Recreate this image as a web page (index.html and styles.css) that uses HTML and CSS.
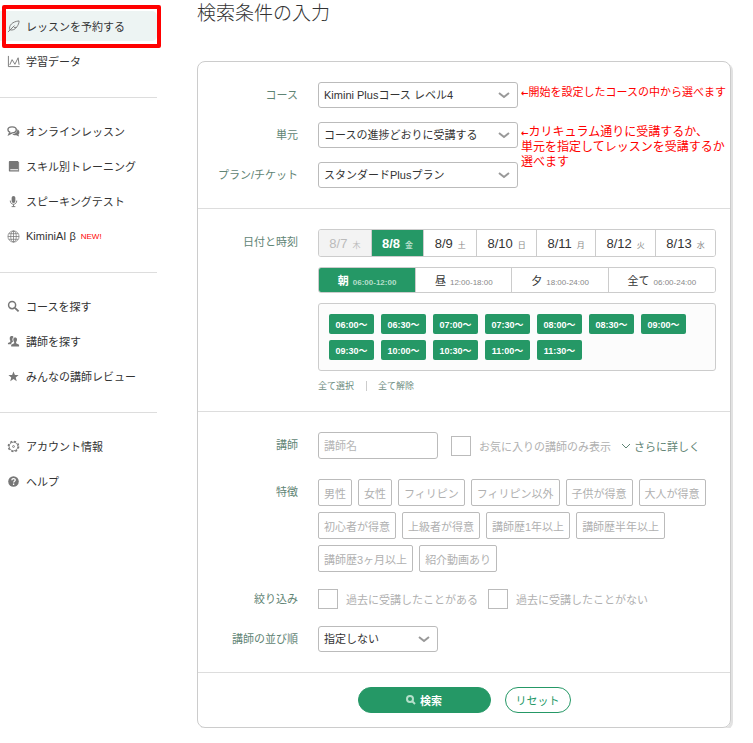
FILE: index.html
```html
<!DOCTYPE html>
<html lang="ja">
<head>
    <meta charset="UTF-8">
    <meta name="viewport" content="width=device-width, initial-scale=1.0">
    <title>検索条件の入力</title>
    <link rel="stylesheet" href="styles.css">
</head>
<body>
    <nav class="sidebar">
        <div class="menu-group">
            <a href="#" class="active">
                <svg viewBox="0 0 14 14"><path d="M1 13L8 6M3 10.5C1.500 6 6 1.500 13 1C13 3.500 12 5.500 10.500 7.500C9 10 6 11.500 3 10.500M7.500 8H10"/></svg>
                レッスンを予約する
            </a>
            <a href="#">
                <svg viewBox="0 0 14 14"><path d="M1.500 1V12.500H13.500M3 10.500L5.500 5L8.500 10L12 3L13 10.500"/></svg>
                学習データ
            </a>
        </div>
        <div class="menu-group">
            <a href="#">
                <svg viewBox="0 0 14 14"><path stroke-width="1.500" d="M5.500 2C8.200 2 10 3.300 10 5.200S8.200 8.500 5.500 8.500L2 10.300L3 7.800C1.700 7.200 1 6.300 1 5.200C1 3.300 2.800 2 5.500 2Z"/><path class="fill" d="M11 4.500C14 6 14 9 12.300 10.200L13 12.500L10 11C8 11.200 6.500 10.700 5.700 9.700C9 9.500 11.500 7.500 11 4.500Z"/></svg>
                オンラインレッスン
            </a>
            <a href="#">
                <svg viewBox="0 0 14 14"><path class="fill" d="M2.500 1H12V10H3.500V11H12V12.500H3C2.300 12.500 2 12 2 11.300V1.800Z"/><path d="M12.500 2V12.500"/></svg>
                スキル別トレーニング
            </a>
            <a href="#">
                <svg viewBox="0 0 14 14"><rect class="fill" x="5" y="1" width="4" height="7.500" rx="2"/><path d="M3.500 6C3.500 11.300 10.500 11.300 10.500 6M7 10V12.500M5 12.500H9"/></svg>
                スピーキングテスト
            </a>
            <a href="#">
                <svg viewBox="0 0 14 14" stroke-width=".8"><circle cx="7" cy="7" r="6"/><ellipse cx="7" cy="7" rx="3" ry="6"/><path d="M7 1V13M1 7H13M2 4H12M2 10H12"/></svg>
                KiminiAI β <span class="new">NEW!</span>
            </a>
        </div>
        <div class="menu-group">
            <a href="#">
                <svg viewBox="0 0 14 14"><circle cx="5.500" cy="5.500" r="3.800" stroke-width="1.600"/><path stroke-width="2" d="M8.500 8.500L12.500 12.300"/></svg>
                コースを探す
            </a>
            <a href="#">
                <svg viewBox="0 0 14 14"><path class="fill" d="M3 3C3 .5 7 .5 7 2.500C5.500 3.500 5.500 5.500 6.500 7C5 8 4.500 8.500 4.500 10H1V8.500L3.500 7.500V6C2.800 5 3 4 3 3ZM6.800 4.500C6.800 2 10.800 2 10.800 4.500C10.800 6 10.300 7 9.800 7.500V9L13 10.500V12.500H4.500V10.500L7.700 9V7.500C7.200 7 6.800 6 6.800 4.500Z"/></svg>
                講師を探す
            </a>
            <a href="#">
                <svg viewBox="0 0 14 14"><path class="fill" d="M7 1.500L8.500 5.300L12.500 5.500L9.400 8L10.500 12L7 9.800L3.500 12L4.600 8L1.500 5.500L5.500 5.300Z"/></svg>
                みんなの講師レビュー
            </a>
        </div>
        <div class="menu-group">
            <a href="#">
                <svg viewBox="0 0 14 14"><circle cx="7" cy="7" r="4.700"/><circle cx="7" cy="7" r="5.600" stroke-width="1.400" stroke-dasharray="2.200 2.200"/><circle cx="7" cy="7" r="1"/></svg>
                アカウント情報
            </a>
            <a href="#">
                <svg viewBox="0 0 14 14"><circle class="fill" cx="7" cy="7" r="5.700"/><path class="question" d="M5.200 5.700C5.200 3.300 9 3.500 8.900 5.500C8.900 6.800 7.100 6.600 7.100 8.200M7.100 9.200V10.700"/></svg>
                ヘルプ
            </a>
        </div>
    </nav>

    <main>
        <h1>検索条件の入力</h1>
        <form class="panel">
            <section>
                <div class="row">
                    <label class="title" for="course">コース</label>
                    <div class="field">
                        <select id="course">
                            <option>Kimini Plusコース レベル4</option>
                        </select>
                        <p class="note"><span class="arrow">←</span>開始を設定したコースの中から選べます</p>
                    </div>
                </div>
                <div class="row">
                    <label class="title" for="unit">単元</label>
                    <div class="field">
                        <select id="unit">
                            <option>コースの進捗どおりに受講する</option>
                        </select>
                        <p class="note large"><span class="arrow">←</span>カリキュラム通りに受講するか、<br>単元を指定してレッスンを受講するか<br>選べます</p>
                    </div>
                </div>
                <div class="row">
                    <label class="title" for="plan">プラン/チケット</label>
                    <div class="field">
                        <select id="plan">
                            <option>スタンダードPlusプラン</option>
                        </select>
                    </div>
                </div>
            </section>

            <section>
                <div class="row">
                    <span class="title">日付と時刻</span>
                    <div class="schedule">
                        <div class="tabs dates">
                            <button type="button" disabled>8/7<small>木</small></button>
                            <button type="button" class="selected">8/8<small>金</small></button>
                            <button type="button">8/9<small>土</small></button>
                            <button type="button">8/10<small>日</small></button>
                            <button type="button">8/11<small>月</small></button>
                            <button type="button">8/12<small>火</small></button>
                            <button type="button">8/13<small>水</small></button>
                        </div>
                        <div class="tabs periods">
                            <button type="button" class="selected">朝<small>06:00-12:00</small></button>
                            <button type="button">昼<small>12:00-18:00</small></button>
                            <button type="button">夕<small>18:00-24:00</small></button>
                            <button type="button">全て<small>06:00-24:00</small></button>
                        </div>
                        <div class="times">
                            <button type="button">06:00〜</button>
                            <button type="button">06:30〜</button>
                            <button type="button">07:00〜</button>
                            <button type="button">07:30〜</button>
                            <button type="button">08:00〜</button>
                            <button type="button">08:30〜</button>
                            <button type="button">09:00〜</button>
                            <button type="button">09:30〜</button>
                            <button type="button">10:00〜</button>
                            <button type="button">10:30〜</button>
                            <button type="button">11:00〜</button>
                            <button type="button">11:30〜</button>
                        </div>
                        <div class="all-links">
                            <a href="#">全て選択</a>
                            <a href="#">全て解除</a>
                        </div>
                    </div>
                </div>
            </section>

            <section class="teacher">
                <div class="row name">
                    <label class="title" for="teacher">講師</label>
                    <div class="field">
                        <input type="text" id="teacher" placeholder="講師名">
                        <label class="check"><input type="checkbox">お気に入りの講師のみ表示</label>
                        <a href="#" class="more"><svg viewBox="0 0 10 6"><path d="M1 1L5 5L9 1"/></svg>さらに詳しく</a>
                    </div>
                </div>
                <div class="row">
                    <span class="title">特徴</span>
                    <div class="tags">
                        <button type="button">男性</button>
                        <button type="button">女性</button>
                        <button type="button">フィリピン</button>
                        <button type="button">フィリピン以外</button>
                        <button type="button">子供が得意</button>
                        <button type="button">大人が得意</button>
                        <button type="button">初心者が得意</button>
                        <button type="button">上級者が得意</button>
                        <button type="button">講師歴1年以上</button>
                        <button type="button">講師歴半年以上</button>
                        <button type="button">講師歴3ヶ月以上</button>
                        <button type="button">紹介動画あり</button>
                    </div>
                </div>
                <div class="row history">
                    <span class="title">絞り込み</span>
                    <div class="field">
                        <label class="check"><input type="checkbox">過去に受講したことがある</label>
                        <label class="check"><input type="checkbox">過去に受講したことがない</label>
                    </div>
                </div>
                <div class="row">
                    <label class="title" for="sort">講師の並び順</label>
                    <div class="field">
                        <select id="sort" class="short">
                            <option>指定しない</option>
                        </select>
                    </div>
                </div>
            </section>

            <div class="actions">
                <button type="submit" class="search"><svg viewBox="0 0 10 10"><circle cx="4" cy="4" r="3"/><path d="M6 6L9 9"/></svg>検索</button>
                <button type="reset" class="reset">リセット</button>
            </div>
        </form>
    </main>
</body>
</html>
```

FILE: styles.css
```css
* {
    box-sizing: border-box;
}
body {
    display: flex;
    gap: 40px;
    margin: 0;
    padding-right: 22px;
    font-family: "Liberation Sans", "Noto Sans CJK JP", sans-serif;
    font-size: 11px;
    color: #333;
    background: #fff;
}
a {
    color: inherit;
    text-decoration: none;
}
button,
input,
select {
    margin: 0;
    font-family: inherit;
    font-size: 11px;
}
svg {
    fill: none;
    stroke: currentColor;
}

/* sidebar */
.sidebar {
    flex: 0 0 157px;
}
.menu-group {
    display: flex;
    flex-direction: column;
    gap: 5px;
    padding: 18px 0 21px;
    border-bottom: 1px solid #ddd;
}
.menu-group:first-child {
    padding-top: 11px;
}
.menu-group:last-child {
    border-bottom: 0;
}
.menu-group a {
    display: flex;
    align-items: center;
    height: 30px;
    padding-left: 7px;
    border-radius: 0 5px 5px 0;
}
.menu-group svg {
    width: 13px;
    height: 13px;
    margin-right: 6px;
    color: #777;
}
.menu-group .fill {
    fill: currentColor;
    stroke: none;
}
.menu-group .question {
    stroke: #fff;
    stroke-width: 1.4;
}
.menu-group .active {
    position: relative;
    background: #edf4f3;
}
.active::after {
    content: "";
    position: absolute;
    inset: -6px -4px -7px 2px;
    border: 4px solid #f00;
    border-radius: 2px;
}
.new {
    margin-left: 5px;
    font-size: 8px;
    color: #f00;
}

/* search form */
main {
    flex: 1;
    min-width: 0;
}
h1 {
    margin: 0 0 33px;
    font-size: 19px;
    font-weight: 300;
    line-height: 28px;
}
.panel {
    border: 1px solid #ccc;
    border-radius: 8px;
    box-shadow: 2px 2px 0 #e2e2e2;
}
section {
    display: flex;
    flex-direction: column;
    gap: 14px;
    padding: 20px 14px 20px 0;
    border-bottom: 1px solid #ddd;
}
.row {
    display: flex;
    gap: 20px;
}
.title {
    flex: 0 0 100px;
    line-height: 26px;
    text-align: right;
    color: #5f8474;
}
.field {
    position: relative;
    display: flex;
    align-items: center;
    white-space: nowrap;
}
select,
input[type="text"] {
    width: 200px;
    height: 26px;
    padding: 0 5px;
    border: 1px solid #bbb;
    border-radius: 3px;
    color: #333;
    background: #fff;
}
select {
    appearance: none;
    background: #fff url("data:image/svg+xml,%3Csvg xmlns='http://www.w3.org/2000/svg' width='12' height='8'%3E%3Cpath d='M1 2L6 6L11 2' fill='none' stroke='%23999' stroke-width='2'/%3E%3C/svg%3E") no-repeat right 7px center;
}
select.short,
input[type="text"] {
    width: 120px;
}
input::placeholder {
    color: #b5b5b5;
}
.note {
    position: absolute;
    top: 3px;
    left: 203px;
    margin: 0;
    line-height: 15px;
    color: #f00;
}
.note.large {
    font-size: 12px;
}
.arrow {
    font-family: "DejaVu Sans", sans-serif;
    font-size: 9px;
    font-weight: bold;
    line-height: 1;
}

/* date and time */
.schedule {
    flex: 1;
}
.tabs {
    display: flex;
    height: 28px;
    margin-bottom: 10px;
    border: 1px solid #ccc;
    border-radius: 3px;
    overflow: hidden;
}
.tabs button {
    flex: 1 1 auto;
    padding: 0;
    border: 0;
    border-left: 1px solid #ccc;
    color: #333;
    background: #fff;
}
.tabs button:first-child {
    border-left: 0;
}
.tabs small {
    margin-left: 5px;
    font-size: 8px;
    color: #888;
}
.dates button {
    font-size: 13px;
}
.dates button:disabled,
.dates button:disabled small {
    color: #bbb;
    background: #f3f3f3;
}
.periods {
    height: 26px;
}
.periods small {
    margin-left: 4px;
}
.tabs .selected {
    font-weight: bold;
    color: #fff;
    background: #259866;
}
.tabs .selected small {
    color: #b5dfca;
}
.times {
    display: flex;
    flex-wrap: wrap;
    gap: 6px 7px;
    padding: 10px;
    border: 1px solid #ccc;
    border-radius: 3px;
    background: #fcfcfc;
}
.times button {
    width: 45px;
    height: 20px;
    padding: 0;
    border: 0;
    border-radius: 2px;
    font-size: 9px;
    font-weight: bold;
    color: #fff;
    background: #259866;
}
.all-links {
    display: flex;
    margin-top: 10px;
    font-size: 9px;
    line-height: 10px;
    color: #6d8c80;
}
.all-links a + a {
    margin-left: 12px;
    padding-left: 11px;
    border-left: 1px solid #ccc;
}

/* teacher */
.teacher {
    gap: 17px;
}
.name {
    margin-bottom: 3px;
}
.teacher input[type="text"] {
    height: 27px;
    margin-right: 13px;
}
.check {
    display: flex;
    align-items: center;
    gap: 8px;
    margin-right: 10px;
    color: #b0b0b0;
}
input[type="checkbox"] {
    appearance: none;
    width: 20px;
    height: 20px;
    border: 1px solid #bbb;
    background: #fff;
}
.more {
    display: flex;
    align-items: center;
    gap: 3px;
    color: #5f8474;
}
.more svg {
    width: 10px;
    height: 6px;
}
.tags {
    display: flex;
    flex: 1;
    flex-wrap: wrap;
    gap: 6px;
}
.tags button {
    height: 27px;
    padding: 0 5px;
    border: 1px solid #bbb;
    border-radius: 2px;
    color: #b0b0b0;
    background: #fff;
}
.history .title {
    line-height: 20px;
}

.actions {
    display: flex;
    justify-content: center;
    gap: 14px;
    padding: 14px;
}
.actions button {
    height: 26px;
    border: 1px solid #259866;
    border-radius: 13px;
}
.search {
    display: flex;
    justify-content: center;
    align-items: center;
    gap: 4px;
    width: 133px;
    font-weight: bold;
    color: #fff;
    background: #259866;
}
.search svg {
    width: 10px;
    height: 10px;
    stroke: #b5dfca;
    stroke-width: 2;
}
.reset {
    width: 66px;
    padding: 0;
    color: #259866;
    background: #fff;
}
```
